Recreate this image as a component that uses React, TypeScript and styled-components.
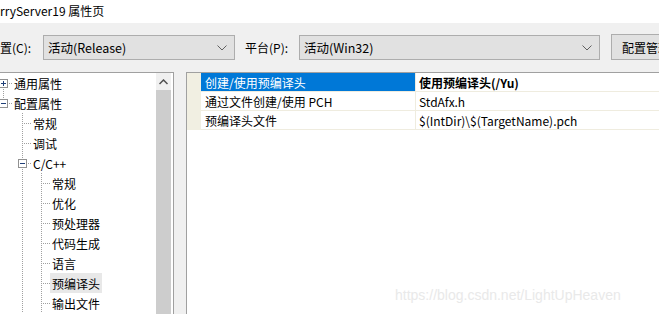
import React from "react";
import styled, { createGlobalStyle, css } from "styled-components";

const GlobalStyle = createGlobalStyle`
  html, body {
    margin: 0;
    padding: 0;
    background: #ffffff;
  }
  body {
    font-family: "Noto Sans CJK SC", "Noto Sans", sans-serif;
    font-size: 12px;
    color: #000;
  }
`;

type LineKind = "full" | "top" | "bottom" | "none";

type TreeItem = {
  label: string;
  level: number;
  line: LineKind;
  guides: boolean[];
  expander?: "plus" | "minus";
  highlight?: boolean;
};

const treeItems: TreeItem[] = [
  { label: "通用属性", level: 0, line: "bottom", guides: [], expander: "plus" },
  { label: "配置属性", level: 0, line: "top", guides: [], expander: "minus" },
  { label: "常规", level: 1, line: "full", guides: [false] },
  { label: "调试", level: 1, line: "full", guides: [false] },
  { label: "C/C++", level: 1, line: "full", guides: [false], expander: "minus" },
  { label: "常规", level: 2, line: "full", guides: [false, true] },
  { label: "优化", level: 2, line: "full", guides: [false, true] },
  { label: "预处理器", level: 2, line: "full", guides: [false, true] },
  { label: "代码生成", level: 2, line: "full", guides: [false, true] },
  { label: "语言", level: 2, line: "full", guides: [false, true] },
  { label: "预编译头", level: 2, line: "full", guides: [false, true], highlight: true },
  { label: "输出文件", level: 2, line: "full", guides: [false, true] },
];

const props = [
  { name: "创建/使用预编译头", value: "使用预编译头(/Yu)", selected: true },
  { name: "通过文件创建/使用 PCH", value: "StdAfx.h" },
  { name: "预编译头文件", value: "$(IntDir)\\$(TargetName).pch" },
];

const Page = styled.div`
  width: 659px;
  height: 314px;
  overflow: hidden;
  background: #f0f0f0;
  display: flex;
  flex-direction: column;
  position: relative;
`;

const TitleBar = styled.div`
  height: 23px;
  background: #ffffff;
  display: flex;
  align-items: center;
  padding-bottom: 2px;
  box-sizing: border-box;
  font-size: 12px;
  white-space: nowrap;
`;

const Toolbar = styled.div`
  height: 49px;
  display: flex;
  align-items: center;
  white-space: nowrap;
  overflow: hidden;
`;

const Label = styled.span<{ $width: number }>`
  width: ${(p) => p.$width}px;
  flex-shrink: 0;
  line-height: 16px;
`;

const Combo = styled.div<{ $width: number }>`
  width: ${(p) => p.$width}px;
  flex-shrink: 0;
  height: 25px;
  box-sizing: border-box;
  border: 1px solid #adadad;
  background: #e1e1e1;
  display: flex;
  align-items: center;
  justify-content: space-between;
  padding: 0 4px 0 4px;
  margin-right: 10px;
  font-size: 12.5px;
`;

const Chevron = styled.svg`
  width: 10px;
  height: 6px;
  margin-right: 3px;
`;

const Button = styled.div`
  height: 26px;
  width: 90px;
  flex-shrink: 0;
  box-sizing: border-box;
  border: 1px solid #adadad;
  background: #e1e1e1;
  display: flex;
  align-items: center;
  padding-left: 10px;
  margin-left: 1px;
  margin-top: -1px;
`;

const Body = styled.div`
  flex: 1;
  display: flex;
  gap: 12px;
  min-height: 0;
`;

const TreePanel = styled.div`
  width: 174px;
  flex-shrink: 0;
  box-sizing: border-box;
  border-top: 1px solid #a0a0a0;
  border-right: 1px solid #a0a0a0;
  background: #ffffff;
  display: flex;
`;

const TreeList = styled.div`
  flex: 1;
  margin-left: -6px;
  overflow: hidden;
`;

const TreeRow = styled.div`
  height: 20px;
  display: flex;
  align-items: stretch;
  white-space: nowrap;
`;

const dotsV = css`
  background-image: repeating-linear-gradient(
    to bottom,
    #a0a0a0 0 1px,
    transparent 1px 2px
  );
`;

const GuideCell = styled.div<{ $line: LineKind }>`
  width: 19px;
  flex-shrink: 0;
  position: relative;
  &::before {
    content: "";
    position: absolute;
    left: 9px;
    width: 1px;
    ${dotsV}
    display: ${(p) => (p.$line === "none" ? "none" : "block")};
    top: ${(p) => (p.$line === "bottom" ? "10px" : "0")};
    bottom: ${(p) => (p.$line === "top" ? "10px" : "0")};
  }
`;

const ConnectorCell = styled(GuideCell)`
  &::after {
    content: "";
    position: absolute;
    left: 10px;
    right: 0;
    top: 10px;
    height: 1px;
    background-image: repeating-linear-gradient(
      to right,
      transparent 0 1px,
      #a0a0a0 1px 2px
    );
  }
`;

const ExpanderBox = styled.div`
  position: absolute;
  left: 5px;
  top: 6px;
  width: 9px;
  height: 9px;
  box-sizing: border-box;
  border: 1px solid #919191;
  background: #ffffff;
  z-index: 1;
  &::before {
    content: "";
    position: absolute;
    left: 1px;
    top: 3px;
    width: 5px;
    height: 1px;
    background: #1f3f78;
  }
`;

const PlusBox = styled(ExpanderBox)`
  &::after {
    content: "";
    position: absolute;
    left: 3px;
    top: 1px;
    width: 1px;
    height: 5px;
    background: #1f3f78;
  }
`;

const TreeLabel = styled.span<{ $highlight?: boolean }>`
  margin-left: -1px;
  padding: 0 2px;
  display: flex;
  align-items: center;
  background: ${(p) => (p.$highlight ? "#e8e8e8" : "transparent")};
`;

const ScrollBar = styled.div`
  width: 15px;
  flex-shrink: 0;
  margin-right: 2px;
  display: flex;
  flex-direction: column;
  background: #f0f0f0;
`;

const ScrollArrow = styled.div`
  height: 17px;
  display: flex;
  align-items: center;
  justify-content: center;
`;

const ScrollThumb = styled.div`
  flex: 1;
  background: #cdcdcd;
`;

const GridPanel = styled.div`
  flex: 1;
  box-sizing: border-box;
  border-top: 1px solid #a0a0a0;
  border-left: 1px solid #a0a0a0;
  background: #ffffff;
`;

const GridRow = styled.div`
  display: grid;
  grid-template-columns: 14px 215px 1fr;
  height: 19px;
  white-space: nowrap;
`;

const Gutter = styled.div`
  background: #f1efe2;
`;

const NameCell = styled.div<{ $selected?: boolean }>`
  display: flex;
  align-items: center;
  padding-left: 4px;
  box-sizing: border-box;
  border-bottom: 1px solid #efecdf;
  border-right: 1px solid #efecdf;
  background: ${(p) => (p.$selected ? "#0078d7" : "#ffffff")};
  color: ${(p) => (p.$selected ? "#ffffff" : "#000000")};
`;

const ValueCell = styled.div<{ $bold?: boolean }>`
  display: flex;
  align-items: center;
  padding-left: 3px;
  box-sizing: border-box;
  border-bottom: 1px solid #efecdf;
  font-weight: ${(p) => (p.$bold ? 700 : 400)};
`;

const Watermark = styled.div`
  position: absolute;
  left: 395px;
  top: 287px;
  font-family: "Liberation Sans", Arial, sans-serif;
  font-size: 14px;
  color: #e9e9e9;
  white-space: nowrap;
`;

function DownChevron() {
  return (
    <Chevron viewBox="0 0 10 6">
      <path d="M0.5 0.5 L5 5 L9.5 0.5" fill="none" stroke="#606060" strokeWidth="1" />
    </Chevron>
  );
}

function TreeNode({ item }: { item: TreeItem }) {
  return (
    <TreeRow>
      {item.guides.map((g, i) => (
        <GuideCell key={i} $line={g ? "full" : "none"} />
      ))}
      <ConnectorCell $line={item.line}>
        {item.expander === "plus" && <PlusBox />}
        {item.expander === "minus" && <ExpanderBox />}
      </ConnectorCell>
      <TreeLabel $highlight={item.highlight}>{item.label}</TreeLabel>
    </TreeRow>
  );
}

export default function App() {
  return (
    <>
      <GlobalStyle />
      <Page>
        <TitleBar>rryServer19 属性页</TitleBar>
        <Toolbar>
          <Label $width={43}>置(C):</Label>
          <Combo $width={192}>
            <span>活动(Release)</span>
            <DownChevron />
          </Combo>
          <Label $width={54}>平台(P):</Label>
          <Combo $width={301}>
            <span>活动(Win32)</span>
            <DownChevron />
          </Combo>
          <Button>配置管理器(O)...</Button>
        </Toolbar>
        <Body>
          <TreePanel>
            <TreeList>
              {treeItems.map((item, i) => (
                <TreeNode key={i} item={item} />
              ))}
            </TreeList>
            <ScrollBar>
              <ScrollArrow>
                <svg width="9" height="6" viewBox="0 0 9 6">
                  <path d="M0.5 5 L4.5 1 L8.5 5" fill="none" stroke="#505050" strokeWidth="1.5" />
                </svg>
              </ScrollArrow>
              <ScrollThumb />
            </ScrollBar>
          </TreePanel>
          <GridPanel>
            {props.map((p, i) => (
              <GridRow key={i}>
                <Gutter />
                <NameCell $selected={p.selected}>{p.name}</NameCell>
                <ValueCell $bold={p.selected}>{p.value}</ValueCell>
              </GridRow>
            ))}
          </GridPanel>
        </Body>
        <Watermark>https://blog.csdn.net/LightUpHeaven</Watermark>
      </Page>
    </>
  );
}
